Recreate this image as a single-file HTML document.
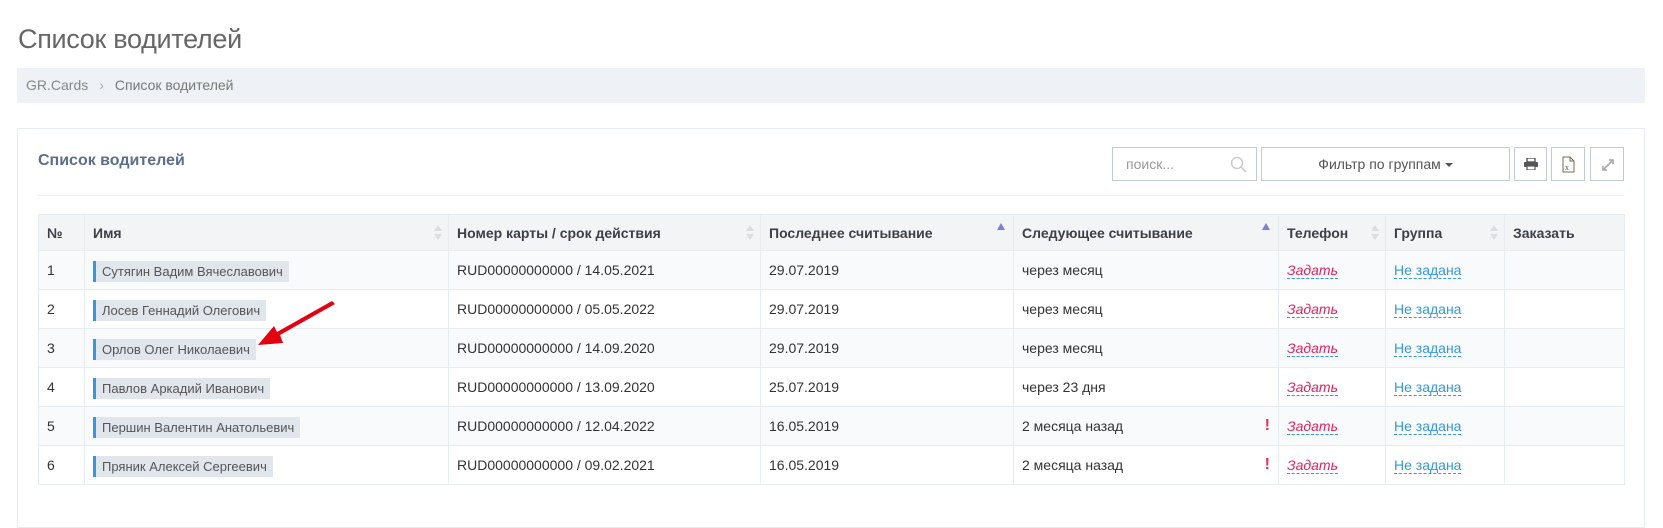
<!DOCTYPE html>
<html><head><meta charset="utf-8">
<style>
*{box-sizing:border-box;margin:0;padding:0}
body{width:1663px;height:487px;overflow:hidden;background:#fff;font-family:"Liberation Sans","DejaVu Sans",sans-serif;color:#333;position:relative}
.abs{position:absolute}
.title{left:18px;top:24px;font-size:27px;color:#666;letter-spacing:-0.3px}
.bc{left:17px;top:68px;width:1628px;height:35px;background:#eef1f5;font-size:14px;color:#888;padding:9px 0 0 9px}
.bc span.sep{margin:0 11px;color:#aaa}
.panel{left:17px;top:128px;width:1628px;height:400px;border:1px solid #e7ecf1}
.ptitle{left:38px;top:152px;font-size:16px;font-weight:bold;color:#5b6f8b}
.div{left:38px;top:195px;width:1586px;height:1px;background:#eef1f5}
.btn{top:147px;height:34px;border:1px solid #c2cad8;background:#fff}
table{position:absolute;left:38px;top:214px;width:1586px;border-collapse:collapse;font-size:14px;table-layout:fixed}
td,th{border:1px solid #e7ecf1;height:39px;padding:0 8px;text-align:left;vertical-align:middle;white-space:nowrap;position:relative}
th{height:36px;background:#f3f4f6;font-weight:bold;color:#3a3f48;font-size:14px}
tr.o td{background:#f9fafc}
.lab{display:inline-block;background:#e1e5ec;border-left:3px solid #3598dc;font-size:13px;color:#555;padding:3px 6px 3px 6px;margin-top:2px}
.z{color:#e0245e;font-style:italic;border-bottom:1px dashed #3598dc}
.g{color:#3598dc;border-bottom:1px dashed #3598dc}
.s{position:absolute;right:6px;top:10px;width:8px;height:16px}
.s:before{content:"";position:absolute;left:0;top:0;border:4px solid transparent;border-bottom:6px solid #ddd;border-top:0}
.s:after{content:"";position:absolute;left:0;top:9px;border:4px solid transparent;border-top:6px solid #ddd;border-bottom:0}
.up{position:absolute;right:8px;top:8px;border:4px solid transparent;border-bottom:7px solid #7b7fd6;border-top:0}
.ex{position:absolute;right:8px;top:10px;color:#e7304a;font-weight:bold;font-size:16px;font-style:normal}
</style></head><body>
<div class="abs title">Список водителей</div>
<div class="abs bc">GR.Cards<span class="sep">›</span><span style="color:#777">Список водителей</span></div>
<div class="abs panel"></div>
<div class="abs ptitle">Список водителей</div>
<div class="abs div"></div>
<div class="abs btn" style="left:1112px;width:145px;font-size:14px;color:#999;padding:8px 0 0 13px">поиск...
<svg style="position:absolute;right:8px;top:8px" width="18" height="18" viewBox="0 0 18 18"><circle cx="7" cy="7" r="5.5" fill="none" stroke="#ccc" stroke-width="1.5"/><path d="M11 11L16 16" stroke="#ccc" stroke-width="1.8"/></svg></div>
<div class="abs btn" style="left:1261px;width:249px;font-size:14px;color:#555;text-align:center;padding-top:8px">Фильтр по группам <span style="display:inline-block;border:4px solid transparent;border-top:4px solid #555;border-bottom:0;vertical-align:middle"></span></div>
<div class="abs btn" style="left:1514px;width:33px">
<svg style="position:absolute;left:9px;top:10px" width="14" height="12" viewBox="0 0 14 12"><rect x="3" y="0" width="8" height="4" fill="none" stroke="#555" stroke-width="1.4"/><rect x="0" y="4" width="14" height="5" rx="1" fill="#555"/><rect x="3" y="8" width="8" height="4" fill="#fff" stroke="#555" stroke-width="1.2"/></svg></div>
<div class="abs btn" style="left:1551px;width:34px">
<svg style="position:absolute;left:10px;top:8px" width="13" height="17" viewBox="0 0 13 17"><path d="M1 1H8L12 5V16H1Z" fill="#fff" stroke="#7a6a55" stroke-width="1"/><path d="M8 1V5H12" fill="none" stroke="#7a6a55"/><text x="3" y="14" font-size="8" font-family="Liberation Serif" fill="#555">x</text></svg></div>
<div class="abs btn" style="left:1590px;width:34px">
<svg style="position:absolute;left:11px;top:11px" width="12" height="12" viewBox="0 0 12 12"><path d="M1 11L11 1M7 1H11V5M1 7V11H5" fill="none" stroke="#aaa" stroke-width="1.6"/></svg></div>

<table>
<colgroup><col style="width:46px"><col style="width:364px"><col style="width:312px"><col style="width:253px"><col style="width:265px"><col style="width:107px"><col style="width:119px"><col style="width:120px"></colgroup>
<tr><th>№</th><th>Имя<i class="s"></i></th><th>Номер карты / срок действия<i class="s"></i></th><th>Последнее считывание<i class="up"></i></th><th>Следующее считывание<i class="up"></i></th><th>Телефон<i class="s"></i></th><th>Группа<i class="s"></i></th><th>Заказать</th></tr>
<tr class="o"><td>1</td><td><span class="lab">Сутягин Вадим Вячеславович</span></td><td>RUD00000000000 / 14.05.2021</td><td>29.07.2019</td><td>через месяц</td><td><span class="z">Задать</span></td><td><span class="g">Не задана</span></td><td></td></tr>
<tr><td>2</td><td><span class="lab">Лосев Геннадий Олегович</span></td><td>RUD00000000000 / 05.05.2022</td><td>29.07.2019</td><td>через месяц</td><td><span class="z">Задать</span></td><td><span class="g">Не задана</span></td><td></td></tr>
<tr class="o"><td>3</td><td><span class="lab">Орлов Олег Николаевич</span></td><td>RUD00000000000 / 14.09.2020</td><td>29.07.2019</td><td>через месяц</td><td><span class="z">Задать</span></td><td><span class="g">Не задана</span></td><td></td></tr>
<tr><td>4</td><td><span class="lab">Павлов Аркадий Иванович</span></td><td>RUD00000000000 / 13.09.2020</td><td>25.07.2019</td><td>через 23 дня</td><td><span class="z">Задать</span></td><td><span class="g">Не задана</span></td><td></td></tr>
<tr class="o"><td>5</td><td><span class="lab">Першин Валентин Анатольевич</span></td><td>RUD00000000000 / 12.04.2022</td><td>16.05.2019</td><td>2 месяца назад<i class="ex">!</i></td><td><span class="z">Задать</span></td><td><span class="g">Не задана</span></td><td></td></tr>
<tr><td>6</td><td><span class="lab">Пряник Алексей Сергеевич</span></td><td>RUD00000000000 / 09.02.2021</td><td>16.05.2019</td><td>2 месяца назад<i class="ex">!</i></td><td><span class="z">Задать</span></td><td><span class="g">Не задана</span></td><td></td></tr>
</table>
<svg class="abs" style="left:250px;top:298px" width="95" height="55" viewBox="0 0 95 55"><path d="M85 6L30 37L33 45L8 47L24 28L27 34L82 3Z" fill="#e3000f"/></svg>
</body></html>
